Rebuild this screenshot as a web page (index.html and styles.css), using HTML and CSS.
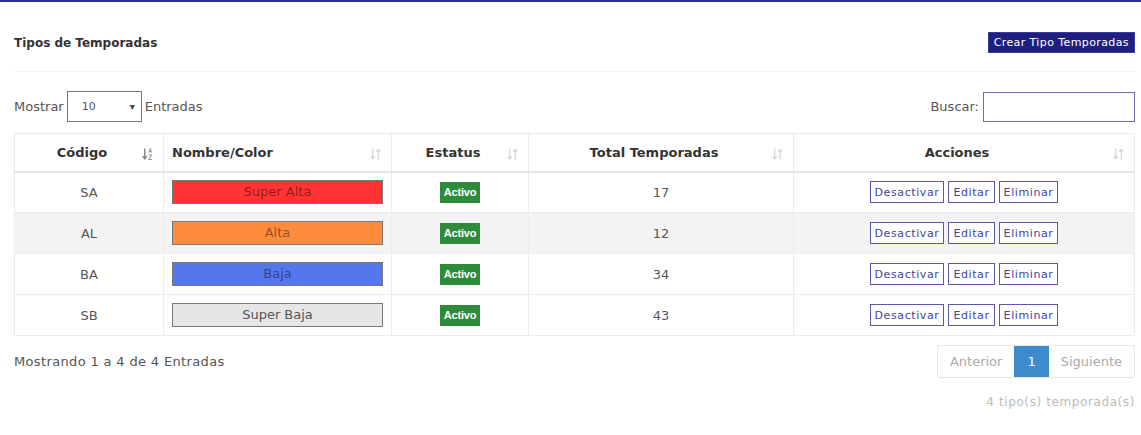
FILE: index.html
```html
<!DOCTYPE html>
<html lang="es">
<head>
<meta charset="utf-8">
<title>Tipos de Temporadas</title>
<link rel="stylesheet" href="styles.css">
</head>
<body>
<div class="topbar"></div>
<div class="page">
  <div class="head">
    <h1 class="title">Tipos de Temporadas</h1>
    <button class="btn-create">Crear Tipo Temporadas</button>
  </div>
  <div class="controls">
    <label class="length">Mostrar
      <span class="select"><span>10</span><span class="caret">▾</span></span>
      Entradas</label>
    <label class="search">Buscar: <span class="input"></span></label>
  </div>
  <table class="grid">
    <colgroup>
      <col class="c1"><col class="c2"><col class="c3"><col class="c4"><col class="c5">
    </colgroup>
    <thead>
      <tr>
        <th class="center"><span>Código</span><svg class="sort active" viewBox="0 0 12 14"><path d="M3 1v11M0.8 9.5L3 12.2 5.2 9.5" fill="none" stroke="currentColor" stroke-width="1.6"/><path d="M7.5 5.5L9 1l1.5 4.5M8 4.2h2" fill="none" stroke="currentColor" stroke-width="1"/><path d="M7.3 8h3.4L7.3 13h3.4" fill="none" stroke="currentColor" stroke-width="1"/></svg></th>
        <th class="left"><span>Nombre/Color</span><svg class="sort" viewBox="0 0 12 14"><path d="M3 1v11M0.8 9.5L3 12.2 5.2 9.5" fill="none" stroke="currentColor" stroke-width="1.4"/><path d="M9 13V2M6.8 4.5L9 1.8l2.2 2.7" fill="none" stroke="currentColor" stroke-width="1.4"/></svg></th>
        <th class="center"><span>Estatus</span><svg class="sort" viewBox="0 0 12 14"><path d="M3 1v11M0.8 9.5L3 12.2 5.2 9.5" fill="none" stroke="currentColor" stroke-width="1.4"/><path d="M9 13V2M6.8 4.5L9 1.8l2.2 2.7" fill="none" stroke="currentColor" stroke-width="1.4"/></svg></th>
        <th class="center"><span>Total Temporadas</span><svg class="sort" viewBox="0 0 12 14"><path d="M3 1v11M0.8 9.5L3 12.2 5.2 9.5" fill="none" stroke="currentColor" stroke-width="1.4"/><path d="M9 13V2M6.8 4.5L9 1.8l2.2 2.7" fill="none" stroke="currentColor" stroke-width="1.4"/></svg></th>
        <th class="center"><span>Acciones</span><svg class="sort" viewBox="0 0 12 14"><path d="M3 1v11M0.8 9.5L3 12.2 5.2 9.5" fill="none" stroke="currentColor" stroke-width="1.4"/><path d="M9 13V2M6.8 4.5L9 1.8l2.2 2.7" fill="none" stroke="currentColor" stroke-width="1.4"/></svg></th>
      </tr>
    </thead>
    <tbody>
      <tr>
        <td>SA</td>
        <td class="colorcell"><div class="swatch red">Super Alta</div></td>
        <td><span class="badge">Activo</span></td>
        <td>17</td>
        <td><div class="actions"><button>Desactivar</button><button>Editar</button><button>Eliminar</button></div></td>
      </tr>
      <tr class="odd">
        <td>AL</td>
        <td class="colorcell"><div class="swatch orange">Alta</div></td>
        <td><span class="badge">Activo</span></td>
        <td>12</td>
        <td><div class="actions"><button>Desactivar</button><button>Editar</button><button>Eliminar</button></div></td>
      </tr>
      <tr>
        <td>BA</td>
        <td class="colorcell"><div class="swatch blue">Baja</div></td>
        <td><span class="badge">Activo</span></td>
        <td>34</td>
        <td><div class="actions"><button>Desactivar</button><button>Editar</button><button>Eliminar</button></div></td>
      </tr>
      <tr>
        <td>SB</td>
        <td class="colorcell"><div class="swatch gray">Super Baja</div></td>
        <td><span class="badge">Activo</span></td>
        <td>43</td>
        <td><div class="actions"><button>Desactivar</button><button>Editar</button><button>Eliminar</button></div></td>
      </tr>
    </tbody>
  </table>
  <div class="foot">
    <div class="info">Mostrando 1 a 4 de 4 Entradas</div>
    <div class="pager">
      <span class="pg">Anterior</span><span class="pg current">1</span><span class="pg">Siguiente</span>
    </div>
  </div>
  <div class="count">4 tipo(s) temporada(s)</div>
</div>
</body>
</html>
```
FILE: styles.css
```css
* { box-sizing: border-box; }
html, body { margin: 0; background: #fff; }
body {
  font-family: "DejaVu Sans", "Liberation Sans", Arial, sans-serif;
  font-size: 13px;
  color: #555;
}
.topbar { height: 2px; background: #2b2f8c; }
.page { padding: 0 6px 0 14px; }

.head {
  display: flex;
  align-items: center;
  justify-content: space-between;
  padding: 30px 0 18px;
  border-bottom: 1px solid #f0f0f0;
}
.title {
  margin: 0;
  font-size: 12px;
  font-weight: bold;
  color: #333;
}
.btn-create {
  height: 21px;
  padding: 0 5px;
  background: #1f1f80;
  color: #fff;
  border: 1px solid #3a3aa0;
  font-family: inherit;
  font-size: 11px;
  letter-spacing: 0.4px;
}

.controls {
  display: flex;
  justify-content: space-between;
  align-items: center;
  margin-top: 19px;
}
.length, .search { display: flex; align-items: center; gap: 3px; }
.select {
  display: flex;
  align-items: center;
  justify-content: space-between;
  width: 75px;
  height: 31px;
  border: 1px solid #777;
  padding: 0 6px 0 14px;
  font-size: 11px;
  color: #555;
}
.caret { font-size: 10px; color: #444; }
.search { gap: 4px; }
.input {
  display: block;
  width: 152px;
  height: 30px;
  border: 1px solid #6b6bb0;
}

.grid {
  width: 100%;
  border-collapse: collapse;
  table-layout: fixed;
  margin-top: 11px;
  border: 1px solid #ececec;
}
.c1 { width: 149px; }
.c2 { width: 228px; }
.c3 { width: 137px; }
.c4 { width: 265px; }
.c5 { width: auto; }
.grid th {
  height: 38px;
  position: relative;
  font-size: 13px;
  font-weight: bold;
  color: #333;
  border: 1px solid #ececec;
  border-bottom: 2px solid #e4e4e4;
  padding: 0 22px 0 8px;
}
.grid th.center { text-align: center; }
.grid th.left { text-align: left; }
.sort {
  position: absolute;
  right: 10px;
  top: 13px;
  width: 11px;
  height: 14px;
  color: #d6d6d6;
}
.sort.active { color: #888; }
.grid td {
  height: 41px;
  text-align: center;
  border: 1px solid #ececec;
  padding: 0 8px;
  color: #555;
}
.grid tr.odd td { background: #f3f3f3; }
.grid td.colorcell { padding: 0 8px; }
.swatch {
  height: 24px;
  line-height: 22px;
  border: 1px solid #777;
  color: rgba(0, 0, 0, 0.45);
  font-size: 13px;
}
.swatch.red { background: #ff3333; }
.swatch.orange { background: #ff8c3c; }
.swatch.blue { background: #5577ee; }
.swatch.gray { background: #e6e6e6; color: #555; }

.badge {
  display: inline-block;
  width: 40px;
  height: 21px;
  line-height: 21px;
  background: #2e8b3a;
  color: #fff;
  font-family: "Liberation Sans", Arial, sans-serif;
  font-size: 11px;
  font-weight: bold;
  letter-spacing: -0.2px;
}
.actions { display: flex; justify-content: center; gap: 4px; }
.actions button {
  height: 22px;
  padding: 0 4px;
  background: #fff;
  border: 1px solid #5a5aac;
  color: #44449a;
  font-family: inherit;
  font-size: 11px;
  letter-spacing: 0.6px;
}

.foot {
  display: flex;
  justify-content: space-between;
  align-items: center;
  margin-top: 9px;
}
.info { font-size: 13px; color: #555; letter-spacing: 0.35px; }
.pager {
  display: flex;
  border: 1px solid #e6e6e6;
  border-radius: 3px;
  height: 33px;
}
.pg {
  display: flex;
  align-items: center;
  padding: 0 12px;
  color: #aaa;
  font-size: 13px;
}
.pg.current {
  background: #3d8bcd;
  color: #fff;
  padding: 0 13px;
}
.count {
  text-align: right;
  margin-top: 17px;
  color: #bbb;
  font-size: 12px;
  letter-spacing: 0.6px;
}
```
